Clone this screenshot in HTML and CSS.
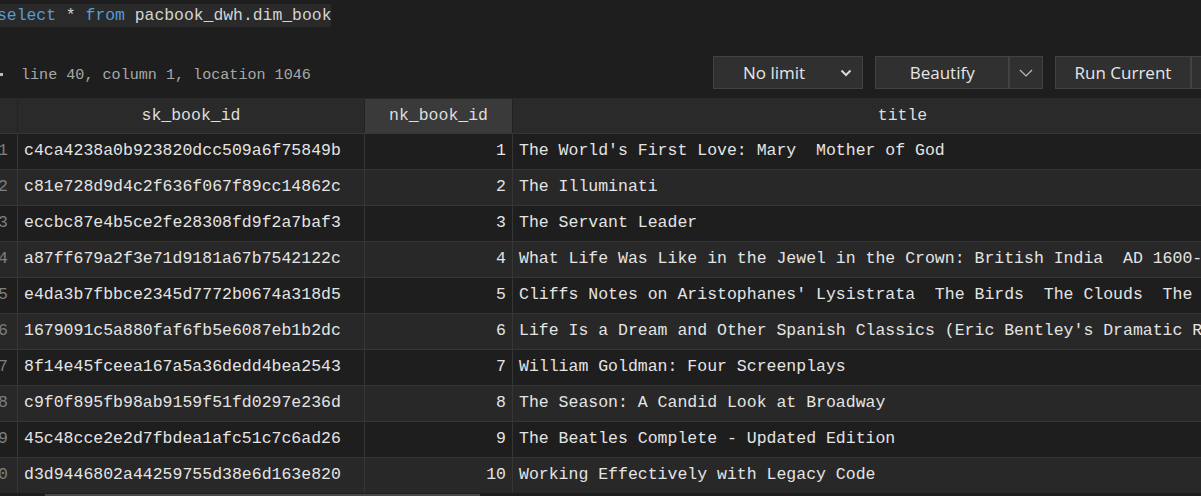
FILE: index.html
```html
<!DOCTYPE html>
<html>
<head>
<meta charset="utf-8">
<link rel="stylesheet" href="styles.css">
</head>
<body>
<div class="app">
  <div class="editor">
    <div class="code-line"><span class="sel"><span class="kw">select</span> * <span class="kw">from</span> pacbook_dwh.dim_book</span></div>
  </div>
  <div class="toolbar">
    <div class="status"><span class="bullet"></span><span class="status-text">line 40, column 1, location 1046</span></div>
    <div class="actions">
      <div class="btn select-btn">
        <span class="btn-label">No limit</span>
        <svg class="chev-bold" width="12" height="8" viewBox="0 0 12 8"><path d="M1.5 1.5 L6 6 L10.5 1.5" fill="none" stroke="#d8d8d8" stroke-width="2"/></svg>
      </div>
      <div class="btn split">
        <span class="btn-main">Beautify</span>
        <span class="btn-drop"><svg width="14" height="8" viewBox="0 0 14 8"><path d="M1 1 L7 7 L13 1" fill="none" stroke="#bdbdbd" stroke-width="1.2"/></svg></span>
      </div>
      <div class="btn split run">
        <span class="btn-main">Run Current</span>
        <span class="btn-drop"><svg width="14" height="8" viewBox="0 0 14 8"><path d="M1 1 L7 7 L13 1" fill="none" stroke="#bdbdbd" stroke-width="1.2"/></svg></span>
      </div>
    </div>
  </div>
  <div class="grid">
    <div class="row head">
      <div class="cell gut"></div>
      <div class="cell c-sk">sk_book_id</div>
      <div class="cell c-nk active">nk_book_id</div>
      <div class="cell c-title">title</div>
    </div>
    <div class="row odd"><div class="cell gut">1</div><div class="cell c-sk">c4ca4238a0b923820dcc509a6f75849b</div><div class="cell c-nk">1</div><div class="cell c-title">The World's First Love: Mary  Mother of God</div></div>
    <div class="row even"><div class="cell gut">2</div><div class="cell c-sk">c81e728d9d4c2f636f067f89cc14862c</div><div class="cell c-nk">2</div><div class="cell c-title">The Illuminati</div></div>
    <div class="row odd"><div class="cell gut">3</div><div class="cell c-sk">eccbc87e4b5ce2fe28308fd9f2a7baf3</div><div class="cell c-nk">3</div><div class="cell c-title">The Servant Leader</div></div>
    <div class="row even"><div class="cell gut">4</div><div class="cell c-sk">a87ff679a2f3e71d9181a67b7542122c</div><div class="cell c-nk">4</div><div class="cell c-title">What Life Was Like in the Jewel in the Crown: British India  AD 1600-1905</div></div>
    <div class="row odd"><div class="cell gut">5</div><div class="cell c-sk">e4da3b7fbbce2345d7772b0674a318d5</div><div class="cell c-nk">5</div><div class="cell c-title">Cliffs Notes on Aristophanes' Lysistrata  The Birds  The Clouds  The Frogs</div></div>
    <div class="row even"><div class="cell gut">6</div><div class="cell c-sk">1679091c5a880faf6fb5e6087eb1b2dc</div><div class="cell c-nk">6</div><div class="cell c-title">Life Is a Dream and Other Spanish Classics (Eric Bentley's Dramatic Repertoire)</div></div>
    <div class="row odd"><div class="cell gut">7</div><div class="cell c-sk">8f14e45fceea167a5a36dedd4bea2543</div><div class="cell c-nk">7</div><div class="cell c-title">William Goldman: Four Screenplays</div></div>
    <div class="row even"><div class="cell gut">8</div><div class="cell c-sk">c9f0f895fb98ab9159f51fd0297e236d</div><div class="cell c-nk">8</div><div class="cell c-title">The Season: A Candid Look at Broadway</div></div>
    <div class="row odd"><div class="cell gut">9</div><div class="cell c-sk">45c48cce2e2d7fbdea1afc51c7c6ad26</div><div class="cell c-nk">9</div><div class="cell c-title">The Beatles Complete - Updated Edition</div></div>
    <div class="row even"><div class="cell gut">10</div><div class="cell c-sk">d3d9446802a44259755d38e6d163e820</div><div class="cell c-nk">10</div><div class="cell c-title">Working Effectively with Legacy Code</div></div>
  </div>
  <div class="hscroll"><div class="thumb"></div></div>
</div>
</body>
</html>
```

FILE: styles.css
```css
html, body {
  margin: 0;
  padding: 0;
  background: #1e1e1e;
  overflow: hidden;
}
.app {
  width: 1201px;
  height: 496px;
  overflow: hidden;
  background: #1e1e1e;
  display: flex;
  flex-direction: column;
}
.editor {
  height: 36px;
  padding-top: 4px;
  box-sizing: border-box;
}
.code-line {
  font-family: "Liberation Mono", monospace;
  font-size: 16.4px;
  line-height: 23px;
  color: #d4d4d4;
  white-space: pre;
  margin-left: -3px;
}
.sel {
  background: #2a2a2a;
  display: inline-block;
}
.kw { color: #569cd6; }
.toolbar {
  height: 62px;
  display: flex;
  align-items: flex-start;
  justify-content: space-between;
  box-sizing: border-box;
  padding-top: 20px;
}
.status {
  display: flex;
  align-items: center;
  height: 33px;
  padding-top: 4px;
  box-sizing: border-box;
}
.bullet {
  width: 3px;
  height: 3px;
  background: #bbb;
  margin-right: 18px;
}
.status-text {
  font-family: "Liberation Mono", monospace;
  font-size: 15.1px;
  color: #a8a8a8;
  white-space: pre;
}
.actions {
  display: flex;
  gap: 12px;
  margin-right: -40px;
}
.btn {
  height: 33px;
  box-sizing: border-box;
  background: #303030;
  border: 1px solid #424242;
  display: flex;
  align-items: center;
  font-family: "Open Sans", "Noto Sans", sans-serif;
  font-size: 17px;
  color: #e6e6e6;
}
.select-btn {
  width: 150px;
  padding-left: 29px;
  padding-right: 10px;
  justify-content: space-between;
}
.split .btn-main {
  width: 134px;
  text-align: center;
  height: 100%;
  display: flex;
  align-items: center;
  justify-content: center;
  border-right: 2px solid #424242;
}
.split .btn-drop {
  width: 32px;
  display: flex;
  align-items: center;
  justify-content: center;
}
.split { width: 168px; }
.run { width: 186px; }
.grid {
  display: flex;
  flex-direction: column;
  width: 1300px;
}
.row {
  display: grid;
  grid-template-columns: 18px 347px 148px 780px;
  height: 36px;
  box-sizing: border-box;
  border-top: 1px solid #363636;
}
.cell {
  font-family: "Liberation Mono", monospace;
  font-size: 16.5px;
  line-height: 34px;
  color: #e4e4e4;
  white-space: pre;
  overflow: hidden;
  padding: 0 6px;
  box-sizing: border-box;
  border-right: 1px solid #363636;
}
.head {
  height: 35px;
  background: #2a2a2a;
  border-top: 1px solid #2a2a2a;
}
.head .cell {
  text-align: center;
  color: #dedede;
  border-right-color: #232323;
}
.head .active {
  background: #3a3a3a;
}
.odd { background: #1e1e1e; }
.even { background: #282828; }
.gut {
  padding: 0 9px 0 0;
  text-align: right;
  color: #7e7e7e;
  direction: rtl;
}
.c-nk { text-align: right; }
.hscroll {
  flex: 1;
  position: relative;
  background: #1e1e1e;
}
.thumb {
  position: absolute;
  left: 45px;
  width: 435px;
  top: 1px;
  bottom: 0;
  background: #474747;
}
```
